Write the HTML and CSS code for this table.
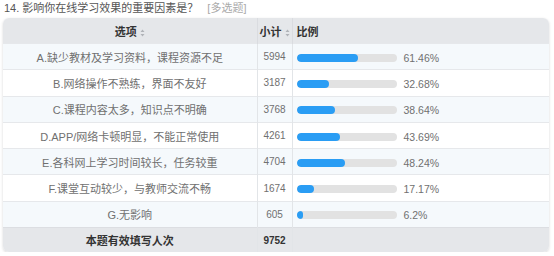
FILE: index.html
```html
<!DOCTYPE html>
<html>
<head>
<meta charset="utf-8">
<link rel="stylesheet" href="styles.css">
</head>
<body>
<div class="title">14. 影响你在线学习效果的重要因素是？<span class="tag">[多选题]</span></div>
<div class="card">
<table class="tbl">
<colgroup><col class="c1"><col class="c2"><col class="c3"></colgroup>
<thead>
<tr><th class="center">选项<svg class="sort" width="5" height="8" viewBox="0 0 5 8"><path d="M2.5 0.5L4.5 3H0.5Z M2.5 7.5L4.5 5H0.5Z" fill="#b0b3b8"/></svg></th><th class="center">小计<svg class="sort" width="5" height="8" viewBox="0 0 5 8"><path d="M2.5 0.5L4.5 3H0.5Z M2.5 7.5L4.5 5H0.5Z" fill="#b0b3b8"/></svg></th><th class="left">比例</th></tr>
</thead>
<tbody>
<tr class="alt"><td class="center">A.缺少教材及学习资料，课程资源不足</td><td class="center num">5994</td><td><div class="ratio"><div class="track"><div class="fill" style="width:61.46%"></div></div><span class="pct">61.46%</span></div></td></tr>
<tr><td class="center">B.网络操作不熟练，界面不友好</td><td class="center num">3187</td><td><div class="ratio"><div class="track"><div class="fill" style="width:32.68%"></div></div><span class="pct">32.68%</span></div></td></tr>
<tr class="alt"><td class="center">C.课程内容太多，知识点不明确</td><td class="center num">3768</td><td><div class="ratio"><div class="track"><div class="fill" style="width:38.64%"></div></div><span class="pct">38.64%</span></div></td></tr>
<tr><td class="center">D.APP/网络卡顿明显，不能正常使用</td><td class="center num">4261</td><td><div class="ratio"><div class="track"><div class="fill" style="width:43.69%"></div></div><span class="pct">43.69%</span></div></td></tr>
<tr class="alt"><td class="center">E.各科网上学习时间较长，任务较重</td><td class="center num">4704</td><td><div class="ratio"><div class="track"><div class="fill" style="width:48.24%"></div></div><span class="pct">48.24%</span></div></td></tr>
<tr><td class="center">F.课堂互动较少，与教师交流不畅</td><td class="center num">1674</td><td><div class="ratio"><div class="track"><div class="fill" style="width:17.17%"></div></div><span class="pct">17.17%</span></div></td></tr>
<tr class="alt"><td class="center">G.无影响</td><td class="center num">605</td><td><div class="ratio"><div class="track"><div class="fill" style="width:6.2%"></div></div><span class="pct">6.2%</span></div></td></tr>
</tbody>
<tfoot>
<tr><td class="center bold">本题有效填写人次</td><td class="center bold num">9752</td><td></td></tr>
</tfoot>
</table>
</div>
</body>
</html>
```

FILE: styles.css
```css
html, body {
  margin: 0;
  padding: 0;
  background: #ffffff;
}
body {
  font-family: "Liberation Sans", "Noto Sans CJK SC", sans-serif;
  font-size: 11px;
  color: #707070;
  padding: 0 5px 0 3px;
}
.title {
  height: 14px;
  line-height: 14px;
  padding: 1px 0 0 1px;
  color: #555;
  font-size: 11px;
}
.tag {
  color: #aaa;
  margin-left: 9px;
}
.card {
  margin-top: 3px;
  border-radius: 6px;
  overflow: hidden;
  box-shadow: 0 1px 3px rgba(0,0,0,0.16);
  width: 546px;
}
.tbl {
  width: 100%;
  border-collapse: collapse;
  table-layout: fixed;
}
.c1 { width: 254px; }
.c2 { width: 35px; }
.tbl th {
  background: #e5e7ea;
  height: 25px;
  padding: 0;
  font-weight: bold;
  color: #333;
  font-size: 11px;
  border-right: 1px solid #dadce0;
}
.tbl th:last-child { border-right: none; }
.tbl th.left { text-align: left; padding-left: 4px; }
.tbl td {
  height: 25.3px;
  padding: 0;
  border-right: 1px solid #e2e5e8;
  border-top: 1px solid #e6e8eb;
}
.tbl td:last-child { border-right: none; }
.center { text-align: center; }
.num { font-size: 10px; }
.tbl tr.alt td { background: #f5f9fc; }
.tbl tfoot td {
  background: #e5e7ea;
  height: 24px;
  border-top: 1px solid #dcdee2;
  color: #333;
}
.bold { font-weight: bold; }
.sort {
  margin-left: 3px;
  vertical-align: -1px;
}
.ratio {
  display: flex;
  align-items: center;
  padding-left: 4px;
  padding-top: 2px;
}
.track {
  width: 100px;
  height: 8px;
  border-radius: 4px;
  background: #e2e2e2;
  overflow: hidden;
}
.fill {
  height: 100%;
  border-radius: 4px;
  background: #2a9df4;
}
.pct {
  margin-left: 7px;
  font-size: 10.5px;
  color: #707070;
}
```
